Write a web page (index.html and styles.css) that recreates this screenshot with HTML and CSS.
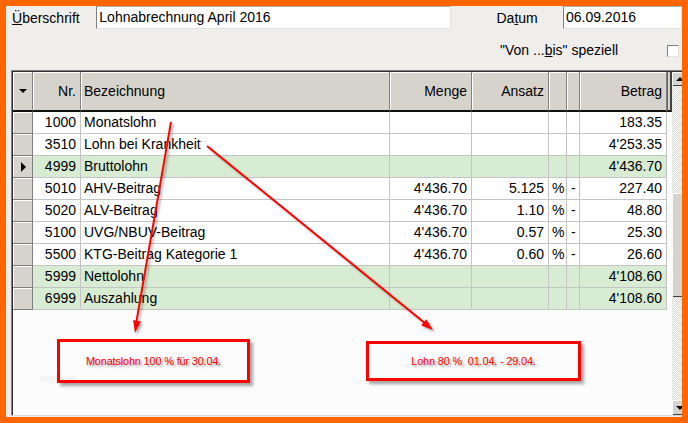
FILE: index.html
```html
<!DOCTYPE html>
<html>
<head>
<meta charset="utf-8">
<title>Lohnabrechnung</title>
<link rel="stylesheet" href="styles.css">
</head>
<body>
<div class="frame">
  <div class="form">
    <div class="row1">
      <label class="lbl lbl-title"><u>Ü</u>berschrift</label>
      <div class="input input-title">Lohnabrechnung April 2016</div>
      <label class="lbl lbl-date">Da<u>t</u>um</label>
      <div class="input input-date">06.09.2016</div>
    </div>
    <div class="row2">
      <span class="lbl lbl-check">"Von ...<u>b</u>is" speziell</span>
      <span class="check"></span>
    </div>
  </div>

  <div class="grid">
    <div class="gin">
      <div class="table">
        <div class="hrow">
          <div class="hc sel"><span class="tri-down"></span></div>
          <div class="hc r">Nr.</div>
          <div class="hc l">Bezeichnung</div>
          <div class="hc r">Menge</div>
          <div class="hc r">Ansatz</div>
          <div class="hc"></div>
          <div class="hc"></div>
          <div class="hc r">Betrag</div>
        </div>

        <div class="row">
          <div class="c sel"></div><div class="c r">1000</div><div class="c l">Monatslohn</div>
          <div class="c r"></div><div class="c r"></div><div class="c l"></div><div class="c l"></div><div class="c r">183.35</div>
        </div>
        <div class="row">
          <div class="c sel"></div><div class="c r">3510</div><div class="c l">Lohn bei Krankheit</div>
          <div class="c r"></div><div class="c r"></div><div class="c l"></div><div class="c l"></div><div class="c r">4'253.35</div>
        </div>
        <div class="row green">
          <div class="c sel"><span class="tri-right"></span></div><div class="c r">4999</div><div class="c l">Bruttolohn</div>
          <div class="c r"></div><div class="c r"></div><div class="c l"></div><div class="c l"></div><div class="c r">4'436.70</div>
        </div>
        <div class="row">
          <div class="c sel"></div><div class="c r">5010</div><div class="c l">AHV-Beitrag</div>
          <div class="c r">4'436.70</div><div class="c r">5.125</div><div class="c l">%</div><div class="c l m">-</div><div class="c r">227.40</div>
        </div>
        <div class="row">
          <div class="c sel"></div><div class="c r">5020</div><div class="c l">ALV-Beitrag</div>
          <div class="c r">4'436.70</div><div class="c r">1.10</div><div class="c l">%</div><div class="c l m">-</div><div class="c r">48.80</div>
        </div>
        <div class="row">
          <div class="c sel"></div><div class="c r">5100</div><div class="c l">UVG/NBUV-Beitrag</div>
          <div class="c r">4'436.70</div><div class="c r">0.57</div><div class="c l">%</div><div class="c l m">-</div><div class="c r">25.30</div>
        </div>
        <div class="row">
          <div class="c sel"></div><div class="c r">5500</div><div class="c l">KTG-Beitrag Kategorie 1</div>
          <div class="c r">4'436.70</div><div class="c r">0.60</div><div class="c l">%</div><div class="c l m">-</div><div class="c r">26.60</div>
        </div>
        <div class="row green">
          <div class="c sel"></div><div class="c r">5999</div><div class="c l">Nettolohn</div>
          <div class="c r"></div><div class="c r"></div><div class="c l"></div><div class="c l"></div><div class="c r">4'108.60</div>
        </div>
        <div class="row green">
          <div class="c sel"></div><div class="c r">6999</div><div class="c l">Auszahlung</div>
          <div class="c r"></div><div class="c r"></div><div class="c l"></div><div class="c l"></div><div class="c r">4'108.60</div>
        </div>
        <div class="empty"></div>
      </div>
      <div class="filler">
        <div class="filler-head"></div>
      </div>
      <div class="vscroll">
        <div class="vs-inner">
          <div class="sbtn sbtn-up"><span class="tri-up"></span></div>
          <div class="track track1"></div>
          <div class="thumb"></div>
          <div class="track track2"></div>
          <div class="sbtn sbtn-down"><span class="tri-down"></span></div>
        </div>
      </div>
    </div>
  </div>

  <div class="watermark">vorlage</div>
  <div class="note note1">Monatslohn 100 % für 30.04.</div>
  <div class="note note2">Lohn 80 %&nbsp; 01.04. - 29.04.</div>

  <svg class="arrows" width="688" height="423" viewBox="0 0 688 423">
    <line x1="171" y1="122" x2="136" y2="324" stroke="#ff0000" stroke-width="2"/>
    <polygon points="135,333 140.9,321.4 133.1,320" fill="#ff0000"/>
    <line x1="207" y1="146" x2="426" y2="324" stroke="#ff0000" stroke-width="2"/>
    <polygon points="433,330 421.2,325.5 426.2,319.3" fill="#ff0000"/>
  </svg>
</div>
</body>
</html>
```

FILE: styles.css
```css
html, body {
  margin: 0;
  padding: 0;
}
body {
  background: #ff6600;
  width: 688px;
  height: 423px;
  overflow: hidden;
  font-family: "Liberation Sans", Arial, sans-serif;
  font-size: 14px;
  color: #000;
}
.frame {
  position: relative;
  margin: 6px 6px 0 6px;
  width: 676px;
  height: 411px;
  background: #f0eeea;
  overflow: hidden;
}
.form {
  height: 64px;
}
.row1 {
  display: flex;
  align-items: center;
  height: 23px;
}
.lbl u {
  text-decoration: underline;
}
.lbl-title {
  width: 85px;
  padding-left: 6px;
  box-sizing: content-box;
}
.input {
  box-sizing: border-box;
  height: 23px;
  background: #fff;
  border: 1px solid;
  border-color: #b0b0b0 #e4e2de #e4e2de #808080;
  padding-left: 2px;
  line-height: 21px;
  white-space: nowrap;
}
.input-title {
  width: 358px;
}
.lbl-date {
  margin-left: 45px;
  width: 67px;
}
.input-date {
  width: 120px;
}
.row2 {
  display: flex;
  align-items: center;
  margin-top: 15px;
  height: 13px;
  padding-left: 494px;
}
.lbl-check {
  width: 167px;
  line-height: 13px;
}
.check {
  display: block;
  width: 12px;
  height: 12px;
  box-sizing: border-box;
  background: #fff;
  border: 1px solid;
  border-color: #808080 #e4e2de #e4e2de #808080;
  flex: none;
}

/* grid */
.grid {
  margin-left: 5px;
  width: 671px;
  height: 346px;
  box-sizing: border-box;
  border-top: 1px solid #808080;
  border-left: 1px solid #808080;
  border-bottom: 1px solid #d8d8d8;
}
.gin {
  display: flex;
  height: 344px;
  box-sizing: border-box;
  border-top: 1px solid #303030;
  border-left: 1px solid #303030;
}
.table {
  width: 654px;
  display: flex;
  flex-direction: column;
  background: #fcfcfc;
}
.hrow, .row {
  display: grid;
  grid-template-columns: 20px 48px 309px 82px 77px 18px 13px 87px;
}
.hrow {
  height: 40px;
}
.hc {
  box-sizing: border-box;
  background: #d6d3cc;
  border-right: 1px solid #808080;
  border-bottom: 2px solid #101010;
  box-shadow: inset 1px 1px 0 #fff;
  display: flex;
  align-items: center;
  padding: 0 4px 0 3px;
  white-space: nowrap;
}
.hc.r {
  justify-content: flex-end;
}
.hc.sel {
  justify-content: center;
  padding: 0;
}
.row {
  height: 22px;
  background: #fff;
}
.row.green {
  background: #d7ecd2;
}
.c {
  box-sizing: border-box;
  border-right: 1px solid #c4c4c4;
  border-bottom: 1px solid #c4c4c4;
  line-height: 21px;
  padding: 0 4px 0 3px;
  white-space: nowrap;
  overflow: hidden;
}
.c.r {
  text-align: right;
}
.c.l {
  text-align: left;
}
.c.m {
  padding-left: 4px;
}
.c.sel {
  background: #d6d3cc;
  border-right: 1px solid #808080;
  border-bottom: 1px solid #808080;
  box-shadow: inset 1px 1px 0 #fff;
  display: flex;
  align-items: center;
  padding: 0 0 0 8px;
}
.tri-down {
  display: block;
  width: 0;
  height: 0;
  border-left: 4px solid transparent;
  border-right: 4px solid transparent;
  border-top: 4px solid #000;
}
.tri-up {
  display: block;
  width: 0;
  height: 0;
  border-left: 4px solid transparent;
  border-right: 4px solid transparent;
  border-bottom: 4px solid #000;
}
.tri-right {
  display: block;
  width: 0;
  height: 0;
  border-top: 5px solid transparent;
  border-bottom: 5px solid transparent;
  border-left: 5px solid #000;
}
.empty {
  flex: 1;
  background: #fcfcfc;
}
.filler {
  width: 5px;
  background: #fcfcfc;
  display: flex;
  flex-direction: column;
}
.filler-head {
  height: 40px;
  box-sizing: border-box;
  background: #d6d3cc;
  border-left: 1px solid #606060;
  border-right: 2px solid #404040;
  border-bottom: 2px solid #101010;
}
.vscroll {
  width: 10px;
  overflow: hidden;
}
.vs-inner {
  width: 16px;
  height: 100%;
  display: flex;
  flex-direction: column;
}
.sbtn {
  box-sizing: border-box;
  background: #d6d3cc;
  box-shadow: inset 1px 1px 0 #fff, inset -1px -1px 0 #404040;
  display: flex;
  align-items: center;
  justify-content: center;
}
.sbtn-up {
  height: 14px;
}
.sbtn-down {
  height: 15px;
}
.track {
  background-color: #f4f4f4;
  background-image: repeating-conic-gradient(#ffffff 0 25%, #d8d6d0 0 50%);
  background-size: 2px 2px;
}
.track1 {
  height: 107px;
}
.track2 {
  height: 103px;
}
.thumb {
  height: 104px;
  box-sizing: border-box;
  background: #d6d3cc;
  box-shadow: inset 1px 1px 0 #fff, inset -1px -1px 0 #404040;
}

/* annotations */
.watermark {
  position: absolute;
  left: 34px;
  top: 366px;
  font-size: 11px;
  color: #ececec;
}
.note {
  position: absolute;
  box-sizing: border-box;
  border: 3px solid #ff0000;
  background: transparent;
  box-shadow: 3px 3px 3px rgba(0, 0, 0, 0.35);
  color: #ff0000;
  font-size: 11px;
  letter-spacing: -0.2px;
  display: flex;
  align-items: center;
  justify-content: center;
  text-shadow: 2px 2px 2px rgba(0, 0, 0, 0.35);
  white-space: pre;
}
.note1 {
  left: 51px;
  top: 333px;
  width: 193px;
  height: 44px;
}
.note2 {
  left: 360px;
  top: 335px;
  width: 215px;
  height: 40px;
}
.arrows {
  position: absolute;
  left: -6px;
  top: -6px;
  filter: drop-shadow(2px 2px 1px rgba(0, 0, 0, 0.3));
}
```
